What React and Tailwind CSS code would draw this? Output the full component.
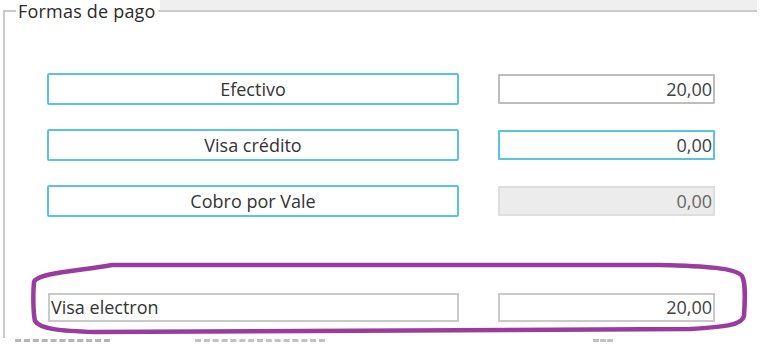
import React from "react";

const methods = [
  { label: "Efectivo", value: "20,00", kind: "normal" },
  { label: "Visa crédito", value: "0,00", kind: "focus" },
  { label: "Cobro por Vale", value: "0,00", kind: "disabled" },
];

const inputStyles = {
  normal: "border-[#bdbdbd] bg-white text-[#404040]",
  focus: "border-[#5cc3dc] bg-white text-[#404040]",
  disabled: "border-[#dedede] bg-[#ececec] text-[#666666]",
};

export default function App() {
  return (
    <div
      className="relative w-[777px] h-[348px] overflow-hidden bg-white flex flex-col"
      style={{ fontFamily: '"Open Sans", "Noto Sans", sans-serif' }}
    >
      {/* grey strip above the group box */}
      <div className="flex h-[10px] shrink-0">
        <div className="w-[160px]" />
        <div className="w-[597px] bg-[#efefef]" />
      </div>

      {/* Formas de pago group */}
      <fieldset className="-mt-[10px] ml-[3px] w-[754px] h-[338px] border-l-2 border-t-2 border-[#cacaca] pl-[42px] shrink-0">
        <legend className="-ml-[31px] px-[2px] text-[18px] leading-[22px] text-[#2a2a2a] tracking-[0.2px]">
          Formas de pago
        </legend>

        <div className="flex flex-col gap-[24px] pt-[51px]">
          {methods.map((m) => (
            <div key={m.label} className="flex items-center">
              <button className="w-[412px] h-[32px] border-2 border-[#5cc3dc] rounded-[2px] bg-white text-[18px] text-[#333333]">
                {m.label}
              </button>
              <div
                className={`ml-[39px] w-[217px] h-[30px] border-2 rounded-[1px] flex items-center justify-end pr-[1px] text-[18px] ${inputStyles[m.kind]}`}
              >
                {m.value}
              </div>
            </div>
          ))}
        </div>

        <div className="flex items-center mt-[76px]">
          <div className="ml-[1px] w-[411px] h-[29px] border-2 border-[#c9c9c9] bg-white flex items-center pl-[1px] text-[18px] text-[#333333]">
            Visa electron
          </div>
          <div className="ml-[39px] w-[217px] h-[29px] border-2 border-[#c9c9c9] bg-white flex items-center justify-end pr-[1px] text-[18px] text-[#404040]">
            20,00
          </div>
        </div>
      </fieldset>

      {/* cut-off text below */}
      <div className="flex items-start pt-[1px]">
        <div className="ml-[15px] w-[95px] border-t-[3px] border-dashed border-[#b5b5b5]" />
        <div className="ml-[85px] w-[130px] border-t-[3px] border-dashed border-[#c2c2c2]" />
        <div className="ml-[268px] w-[20px] border-t-[3px] border-dashed border-[#c2c2c2]" />
      </div>

      {/* purple annotation */}
      <svg
        className="absolute inset-0 pointer-events-none"
        width="777"
        height="348"
        viewBox="0 0 777 348"
      >
        <path
          d="M 112 265 L 660 265 C 705 266, 736 268, 742 276 C 746 283, 745 300, 744 316 C 742 325, 725 327, 690 329 L 95 332 C 60 331, 40 329, 35 321 C 33 312, 33 292, 34 282 C 37 273, 78 271, 112 265 Z"
          fill="none"
          stroke="#9a3c9f"
          strokeWidth="4.5"
          strokeLinejoin="round"
        />
      </svg>
    </div>
  );
}
